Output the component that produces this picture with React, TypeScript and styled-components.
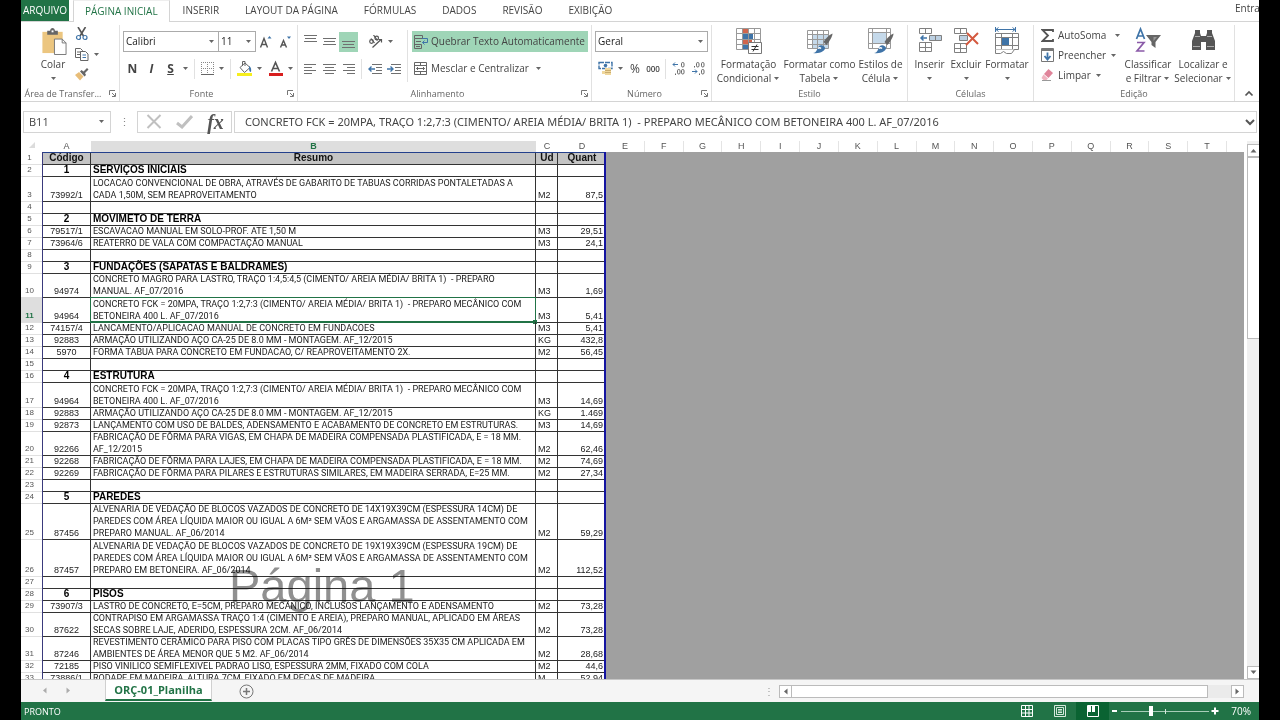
import React from "react";
import styled, { createGlobalStyle, css } from "styled-components";

const GREEN = "#217346";
const LINE = "#d4d4d4";
const ICON = "#666666";
const BLUE = "#3f74a8";
const UI = `"Open Sans", "Noto Sans", sans-serif`;
const SHEET = `"Liberation Sans", Arial, sans-serif`;

const GlobalStyle = createGlobalStyle`
  *, *::before, *::after { box-sizing: border-box; }
  body { margin: 0; background: #000; color: #444; font: 10px/13px ${UI}; }
  button, input, select { font: inherit; color: inherit; }
  button { border: 0; padding: 0; background: none; white-space: nowrap; }
`;

const Frame = styled.div`
  height: 100vh;
  padding: 0 21px;
  background: #000;
`;

const Window = styled.div`
  display: flex;
  flex-direction: column;
  height: 100%;
  overflow: hidden;
  background: #fff;
`;

/* ---------- tab strip ---------- */

const Tabs = styled.nav`
  display: flex;
  flex: none;
  height: 22px;
  border-bottom: 1px solid ${LINE};
`;

const FileTab = styled.button`
  width: 48px;
  margin-right: 4px;
  background: ${GREEN};
  color: #fff;
`;

const Tab = styled.button<{ $active?: boolean }>`
  padding: 0 13px;
  ${(p) =>
    p.$active &&
    css`
      height: 22px;
      padding: 0 11px 1px;
      border: 1px solid ${LINE};
      border-top-color: #eee;
      border-bottom: 0;
      background: #fff;
      color: ${GREEN};
    `}
`;

const SignIn = styled.button`
  width: 24px;
  height: 17px;
  margin-left: auto;
  overflow: hidden;
  text-align: left;
`;

/* ---------- ribbon ---------- */

const Ribbon = styled.section`
  display: flex;
  flex: none;
  height: 80px;
  border-bottom: 1px solid ${LINE};
`;

const GroupBox = styled.section<{ $width: number }>`
  display: flex;
  flex-direction: column;
  flex: none;
  width: ${(p) => p.$width}px;
  height: 76px;
  margin-top: 3px;
  border-right: 1px solid #e1e1e1;
`;

const GroupBody = styled.div<{ $pad?: number; $center?: boolean }>`
  display: flex;
  flex: 1;
  justify-content: ${(p) => (p.$center ? "center" : "flex-start")};
  padding-left: ${(p) => p.$pad ?? 0}px;
`;

const GroupFoot = styled.footer`
  display: flex;
  align-items: center;
  height: 14px;
  margin-bottom: 1px;
  color: #666;
  font-size: 9px;
`;

const GroupName = styled.span`
  flex: 1;
  text-align: center;
  white-space: nowrap;
`;

const Launcher = styled.button`
  display: flex;
  align-items: center;
  justify-content: center;
  width: 14px;
  height: 14px;
`;

const Stack = styled.div`
  display: flex;
  flex-direction: column;
  gap: 6px;
  padding-top: 6px;
`;

const Row = styled.div`
  display: flex;
  align-items: center;
  height: 21px;
`;

const Tool = styled.button<{ $w?: number; $on?: boolean }>`
  display: flex;
  align-items: center;
  justify-content: center;
  width: ${(p) => p.$w ?? 19}px;
  height: 20px;
  background: ${(p) => (p.$on ? "#9fd5b7" : "none")};
  font-size: 12px;
`;

const NumberTool = styled(Tool)`
  font-size: 8px;
  font-weight: 600;
`;

const WideTool = styled.button<{ $on?: boolean }>`
  display: flex;
  align-items: center;
  gap: 3px;
  width: 176px;
  height: 21px;
  padding-left: 2px;
  background: ${(p) => (p.$on ? "#9fd5b7" : "none")};

  svg:last-child:not(:first-child) {
    margin-left: 3px;
  }
`;

const Split = styled.span<{ $tall?: boolean }>`
  width: 1px;
  height: ${(p) => (p.$tall ? 52 : 20)}px;
  margin: ${(p) => (p.$tall ? "5px 4px 0" : "0 3px")};
  background: #e1e1e1;
`;

const Spacer = styled.span`
  width: 8px;
`;

const BigTool = styled.button<{ $w: number }>`
  display: flex;
  flex-direction: column;
  align-items: center;
  width: ${(p) => p.$w}px;
  padding-top: 2px;

  > svg {
    margin-bottom: 2px;
  }
`;

const BigLine = styled.span`
  display: flex;
  align-items: center;
  gap: 2px;
  height: 14px;
`;

const IconStack = styled.div`
  display: flex;
  flex-direction: column;
  gap: 6px;
  padding-top: 2px;
`;

const IconLine = styled.button`
  display: flex;
  align-items: center;
  gap: 4px;
  height: 14px;
`;

const EditStack = styled.div`
  display: flex;
  flex-direction: column;
  width: 82px;
`;

const EditLine = styled.button<{ $gap?: number }>`
  display: flex;
  align-items: center;
  gap: 4px;
  height: 20px;

  svg:last-child {
    margin-left: ${(p) => p.$gap ?? 0}px;
  }
`;

const SelectBox = styled.label<{ $w: number }>`
  display: flex;
  align-items: center;
  width: ${(p) => p.$w}px;
  height: 21px;
  padding-right: 3px;
  border: 1px solid #ababab;
  background: #fff;
  color: #222;

  & + & {
    border-left: 0;
  }
`;

const Select = styled.select`
  flex: 1;
  min-width: 0;
  padding: 0 0 0 2px;
  border: 0;
  outline: 0;
  appearance: none;
  background: none;
`;

const Collapse = styled.button`
  display: flex;
  align-self: flex-end;
  justify-content: center;
  flex: 1;
  padding: 0 0 4px 4px;
`;

/* ---------- formula bar ---------- */

const FormulaRow = styled.div`
  display: flex;
  flex: none;
  align-items: center;
  height: 39px;
  padding: 0 2px;
  font-size: 11px;
`;

const Boxed = styled.div`
  display: flex;
  align-items: center;
  height: 22px;
  border: 1px solid ${LINE};
`;

const NameBox = styled(Boxed)`
  width: 88px;
  padding: 0 5px;
`;

const NameInput = styled.input`
  flex: 1;
  min-width: 0;
  padding: 0;
  border: 0;
  outline: 0;
`;

const Dots = styled.span`
  width: 26px;
  color: #888;
  text-align: center;
`;

const Commands = styled(Boxed)`
  width: 95px;
  margin-right: 2px;
`;

const Command = styled.button`
  display: flex;
  align-items: center;
  justify-content: center;
  width: 31px;
  height: 20px;
`;

const FxLabel = styled(Command)`
  color: #555;
  font: italic bold 20px/20px "Liberation Serif", serif;
`;

const FormulaBox = styled(Boxed)`
  flex: 1;
  padding: 0 1px 0 10px;
`;

const FormulaInput = styled(NameInput)`
  font-family: "Noto Sans", sans-serif;
`;

/* ---------- worksheet ---------- */

const Sheet = styled.main`
  display: flex;
  flex: 1;
  min-height: 0;
  overflow: hidden;
  font-family: ${SHEET};
  font-size: 9px;
  line-height: 12px;
`;

const Printed = styled.div`
  position: relative;
  flex: none;
`;

const Grid = styled.table`
  width: 585px;
  border-spacing: 0;
  table-layout: fixed;
  color: #222;

  th,
  td {
    padding: 0;
    vertical-align: bottom;
    white-space: pre;
  }
`;

const Letter = styled.th<{ $on?: boolean }>`
  height: 11px;
  background: ${(p) => (p.$on ? "#dedede" : "#fff")};
  color: ${(p) => (p.$on ? GREEN : "#555")};
  font-weight: ${(p) => (p.$on ? 700 : 400)};
  line-height: 11px;
`;

const RowNumber = styled.th<{ $on?: boolean }>`
  background: ${(p) => (p.$on ? "#dedede" : "none")};
  box-shadow: 0 1px 0 #e0e0e0;
  color: ${(p) => (p.$on ? GREEN : "#555")};
  font-size: 8px;
  font-weight: ${(p) => (p.$on ? 700 : 400)};
  text-align: center;

  && {
    padding-right: 4px;
  }
`;

const TableRow = styled.tr<{ $h: number }>`
  height: ${(p) => p.$h}px;
`;

/* The lower rule is drawn just outside the cell, so text keeps clear of it. */
const under = "0 1px 0 #333";
const rule = `${under}, inset -1px 0 0 #333`;

const TitleCell = styled.th<{ $first?: boolean; $last?: boolean }>`
  background: #c4c4c4;
  box-shadow: ${(p) =>
    (p.$last ? "inset -2px 0 0 #1414a0, " : "") +
    (p.$first ? "inset 1px 0 0 #3a3a7c, " : "") +
    "inset 0 1px 0 #24408c, " +
    rule};
  color: #111;
  font-size: 10px;
`;

const Code = styled.td<{ $bold?: boolean }>`
  box-shadow: inset 1px 0 0 #3a3a7c, ${rule};
  text-align: center;
  ${(p) => p.$bold && "font-size: 10px; font-weight: 700; color: #000;"}
`;

const Text = styled.td<{ $bold?: boolean }>`
  position: relative;
  box-shadow: ${rule};
  font-family: Roboto, ${SHEET};

  && {
    padding-left: 2px;
  }

  ${(p) => p.$bold && `font-family: ${SHEET}; font-size: 10px; font-weight: 700; color: #000;`}
`;

const Unit = styled.td`
  box-shadow: ${rule};

  && {
    padding-left: 2px;
  }
`;

const Amount = styled.td`
  box-shadow: inset -2px 0 0 #1414a0, ${under};
  text-align: right;

  && {
    padding-right: 3px;
  }
`;

const Selection = styled.span`
  position: absolute;
  inset: 0 0 -1px -1px;
  border: 1px solid ${GREEN};
  box-shadow: inset 0 -1px 0 ${GREEN};

  &::after {
    content: "";
    position: absolute;
    right: -2px;
    bottom: -2px;
    width: 4px;
    height: 4px;
    background: ${GREEN};
  }
`;

const Watermark = styled.div`
  position: absolute;
  top: 418px;
  left: 208px;
  color: #909090;
  font-size: 47px;
  line-height: 54px;
  mix-blend-mode: multiply;
  pointer-events: none;
  white-space: nowrap;
`;

const Outside = styled.div`
  display: flex;
  flex: 1;
  flex-direction: column;
  min-width: 0;
  margin-right: 3px;
`;

const Letters = styled.div`
  display: grid;
  grid-template-columns: repeat(16, 1fr);
  height: 11px;
  padding-right: 17px;
  color: #555;
  line-height: 11px;
  text-align: center;
`;

const OuterLetter = styled.span`
  border-right: 1px solid #e4e4e4;
`;

const Backdrop = styled.div`
  flex: 1;
  background: #a0a0a0;
`;

const VScroll = styled.div`
  display: flex;
  flex: none;
  flex-direction: column;
  width: 12px;
  padding-top: 3px;
  background: #f0f0f0;
`;

const ScrollButton = styled.button`
  display: flex;
  flex: none;
  align-items: center;
  justify-content: center;
  width: 13px;
  height: 13px;
  border: 1px solid #bbb;
  background: #fff;
`;

const VThumb = styled.div`
  flex: 0 0 34%;
  margin-bottom: auto;
  border: 1px solid #bbb;
  border-right: 0;
  background: #fff;
`;

/* ---------- sheet tabs and status bar ---------- */

const SheetTabs = styled.div`
  display: flex;
  flex: none;
  align-items: center;
  height: 23px;
  padding: 0 15px 0 11px;
  border-top: 1px solid #c6c6c6;
  background: #f5f5f5;
`;

const NavArrow = styled.button`
  width: 24px;
  height: 14px;
  opacity: 0.5;
`;

const SheetTab = styled.button`
  align-self: flex-start;
  width: 107px;
  height: 21px;
  margin: 0 27px 0 25px;
  border: 1px solid #d0d0d0;
  border-top: 0;
  border-bottom: 2px solid ${GREEN};
  background: #fff;
  color: ${GREEN};
  font-size: 11px;
  font-weight: 700;
`;

const AddSheet = styled.button`
  display: flex;
`;

const HScroll = styled.div`
  display: flex;
  flex: 0 0 40%;
  align-items: center;
  height: 13px;
  margin-left: auto;
`;

const HTrack = styled.div`
  flex: 1;
  height: 13px;
  padding-right: 23px;
  background: #ebebeb;
`;

const HThumb = styled.div`
  height: 13px;
  border: 1px solid #bbb;
  border-left: 0;
  background: #fff;
`;

const Grip = styled.span`
  width: 20px;
  color: #999;
  text-align: center;
`;

const Status = styled.footer`
  display: flex;
  flex: none;
  align-items: center;
  height: 18px;
  padding: 0 8px 0 3px;
  background: ${GREEN};
  color: #fff;
  font-size: 9px;
`;

const ViewButtons = styled.div`
  display: flex;
  margin-left: auto;
`;

const ViewButton = styled.button<{ $on?: boolean }>`
  display: flex;
  align-items: center;
  justify-content: center;
  width: 33px;
  height: 18px;
  background: ${(p) => (p.$on ? "#0a6332" : "none")};
`;

const ZoomButton = styled.button`
  display: flex;
  justify-content: center;
  width: 12px;
`;

const Zoom = styled.input`
  width: 88px;
  height: 12px;
  margin: 0;
  appearance: none;
  background: linear-gradient(#d5e8dc, #d5e8dc) 50% 50% / 1px 5px no-repeat,
    linear-gradient(#a8cdb8, #a8cdb8) 50% 50% / 100% 1px no-repeat;

  &::-webkit-slider-thumb {
    appearance: none;
    width: 4px;
    height: 10px;
    background: #fff;
  }
`;

const ZoomValue = styled.span`
  width: 30px;
  font-size: 10px;
  text-align: right;
`;

/* ---------- icons ---------- */

const Caret = () => (
  <svg width="7" height="5" viewBox="0 0 7 5" aria-hidden="true">
    <path d="M1 1h5L3.500 4z" fill={ICON} />
  </svg>
);

const Arrow = ({ dir }: { dir: "up" | "down" | "left" | "right" }) => {
  const turn = { up: 0, right: 90, down: 180, left: 270 }[dir];
  return (
    <svg width="9" height="9" viewBox="0 0 9 9" aria-hidden="true">
      <path d="M1.500 6.500h6L4.500 3z" fill={ICON} transform={`rotate(${turn} 4.500 4.500)`} />
    </svg>
  );
};

const LauncherIcon = () => (
  <svg width="7" height="7" viewBox="0 0 7 7" fill="none" stroke="#777">
    <path d="M.5 5V.5H6M3 3l3 3M6.500 3v3.500H3" />
  </svg>
);

const PasteIcon = () => (
  <svg width="27" height="28" viewBox="0 0 27 29">
    <path d="M2 5h21v22H2z" fill="#ecc680" />
    <path d="M7 4h3c0-4 5-4 5 0h3v4H7z" fill="#666" />
    <path d="M11.500 3.500h2v2h-2z" fill="#fff" />
    <path d="M14.500 12.500h8l4 4v12h-12z" fill="#fff" stroke="#777" />
    <path d="M22.500 12.500v4h4" fill="none" stroke="#777" />
  </svg>
);

const ScissorsIcon = () => (
  <svg width="14" height="14" viewBox="0 0 14 14" fill="none">
    <path d="M3 0l5.500 9M10.500 0L5 9" stroke="#555" strokeWidth="1.600" />
    <circle cx="3.500" cy="10.500" r="2" stroke={BLUE} strokeWidth="1.200" />
    <circle cx="10" cy="10.500" r="2" stroke={BLUE} strokeWidth="1.200" />
  </svg>
);

const CopyIcon = () => (
  <svg width="14" height="14" viewBox="0 0 14 14" fill="#fff" stroke="#666">
    <path d="M.5 1.500h5l2 2v7h-7z" />
    <path d="M2 5h4M2 7.500h4" />
    <path d="M5.500 4.500h5l2.500 2.500v6.500h-7.500z" />
    <path d="M7.500 8h3.500M7.500 10.500h3.500" stroke={BLUE} />
  </svg>
);

const BrushIcon = () => (
  <svg width="14" height="14" viewBox="0 0 14 14">
    <path d="M0 8l4-3 4.500 4.500L5 13.500z" fill="#e8bd78" />
    <path d="M5 4.500l1.500-1.500 2 1.500L12 1l1.500 1.500L10 6l1 2-1.500 1.500z" fill="#666" />
  </svg>
);

const FontSizeIcon = ({ grow }: { grow?: boolean }) => (
  <svg width="14" height="16" viewBox="0 0 14 16">
    <path
      d={grow ? "M1.500 13.500L5 4.500l3.500 9M3 10.500h4" : "M2.500 13.500L5.500 6.500l3 7M3.500 11h4"}
      fill="none"
      stroke="#555"
      strokeWidth="1.400"
    />
    <path d={grow ? "M8.500 4.500h4L10.500 2z" : "M9 2.500h4L11 5z"} fill={BLUE} />
  </svg>
);

const BordersIcon = () => (
  <svg width="13" height="13" viewBox="0 0 13 13" fill="none" stroke="#888">
    <path d="M.5 0v12M6.500 0v12M12.500 0v12M0 .5h13M0 6.500h13" strokeDasharray="1 1" />
    <path d="M0 12.500h13" stroke="#666" />
  </svg>
);

const FillIcon = () => (
  <svg width="17" height="17" viewBox="0 0 17 17">
    <path d="M4 7.500L9 3l5 4.500L8.500 12.500z" fill="#fff" stroke="#666" />
    <path d="M6.500 6V1.500h2.500V6" fill="none" stroke="#666" />
    <path d="M13 6c2 1 2.500 3 2 6-2 0-2-3-2-6z" fill={BLUE} />
    <path d="M1 13h15v3H1z" fill="#f6ee1e" />
  </svg>
);

const FontColorIcon = () => (
  <svg width="15" height="17" viewBox="0 0 15 17">
    <path d="M3.500 11.500L7.500 2.500l4 9M5 8.500h5" fill="none" stroke="#555" strokeWidth="1.600" />
    <path d="M1 13h14v3H1z" fill="#d81e1e" />
  </svg>
);

const LinesIcon = ({ rows }: { rows: [number, number, number][] }) => (
  <svg width="13" height="18" viewBox="0 0 13 18" stroke="#707070">
    {rows.map(([x1, x2, y]) => (
      <path key={y} d={`M${x1} ${y}.500H${x2}`} />
    ))}
  </svg>
);

const OrientIcon = () => (
  <svg width="15" height="14" viewBox="0 0 15 14" fill="none" stroke="#555" strokeWidth="1.200">
    <circle cx="3.500" cy="6.500" r="1.800" />
    <path d="M3 3.500l3.500 4.500" />
    <path d="M5.500 0l4 5.500" />
    <circle cx="8.700" cy="3" r="1.800" />
    <path d="M4.500 12.500L13 4.500M10.500 4.500H13.500V7.500" />
  </svg>
);

const IndentIcon = ({ right }: { right?: boolean }) => (
  <svg width="14" height="12" viewBox="0 0 14 12" fill="none" stroke="#707070">
    <path d="M4 1.500h10M8 4.500h6M8 7.500h6M4 10.500h10" />
    <path
      d={right ? "M0 6h6M3.500 3.500L6 6 3.500 8.500" : "M7 6H1M3.500 3.500L1 6l2.500 2.500"}
      stroke={BLUE}
      strokeWidth="1.400"
    />
  </svg>
);

const WrapIcon = () => (
  <svg width="14" height="14" viewBox="0 0 14 14" fill="none" stroke="#666">
    <path d="M.5.500h8v3h-8zM.5 3.500v10h7v-4h-7" />
    <path d="M2 6.500h5M2 11.500h4" />
    <path d="M8 3.500h5.500v4H8.500M10.500 5.500l-2 2 2 2" stroke={BLUE} />
  </svg>
);

const MergeIcon = () => (
  <svg width="14" height="14" viewBox="0 0 14 14" fill="none" stroke="#666">
    <path d="M.5.500h12v12H.5zM.5 3.500h12M.5 9.500h12M6.500.500v3M6.500 9.500v3" />
    <path d="M2.500 6.500h8M4 5L2.500 6.500 4 8M9 5l1.500 1.500L9 8" />
  </svg>
);

const MoneyIcon = () => (
  <svg width="15" height="15" viewBox="0 0 15 15">
    <path d="M1 1.500h13v6H1z" fill="#fff" stroke={BLUE} strokeWidth="1.400" strokeDasharray="5 1" />
    <circle cx="7.500" cy="4.500" r="1.800" fill={BLUE} />
    <path d="M7 7h6v7H7z" fill="#f0d79c" />
    <path d="M7 9.500h6M7 11.500h6" stroke="#b89a5c" strokeWidth=".7" />
    <path d="M4 10h3v3H4z" fill="#f0d79c" />
  </svg>
);

const DecimalIcon = ({ less }: { less?: boolean }) => (
  <svg width="15" height="15" viewBox="0 0 15 15" fill="none" stroke="#666">
    {less ? (
      <g>
        <rect x="5.500" y="1.500" width="2.500" height="4.500" rx="1.200" />
        <rect x="10.500" y="1.500" width="2.500" height="4.500" rx="1.200" />
        <rect x="10.500" y="8.500" width="2.500" height="4.500" rx="1.200" />
        <path d="M3.500 5v1.500M8.500 12.500V14" />
        <path d="M1 10.500h5M4 8.500l2 2-2 2" stroke={BLUE} />
      </g>
    ) : (
      <g>
        <rect x="9.500" y="1.500" width="2.500" height="4.500" rx="1.200" />
        <rect x="5.500" y="8.500" width="2.500" height="4.500" rx="1.200" />
        <rect x="9.500" y="8.500" width="2.500" height="4.500" rx="1.200" />
        <path d="M3.500 12.500V14" />
        <path d="M6 3.500H1M3 1.500l-2 2 2 2" stroke={BLUE} />
      </g>
    )}
  </svg>
);

const CondFormatIcon = () => (
  <svg width="26" height="28" viewBox="0 0 26 28">
    <path d="M.5 1.500h24v21H.5z" fill="#fff" />
    <path d="M7 2h6v5H7zM7 12h9v5H7z" fill="#d0654c" />
    <path d="M7 7h10v5H7zM7 17h5v5H7z" fill={BLUE} />
    <path
      d="M.5 1.500h24v21H.5zM6.500 1.500v21M12.500 1.500v21M18.500 1.500v21M.5 6.500h24M.5 12.500h24M.5 17.500h24"
      fill="none"
      stroke="#999"
    />
    <path d="M12.500 15.500h13v11h-13z" fill="#fff" stroke="#777" />
    <path d="M15.500 19.500h7M15.500 22.500h7M21 17.500l-4 7" stroke="#333" />
  </svg>
);

const Paintbrush = () => (
  <g>
    <path d="M25.500 6.500c0 3-3 8-6 11.500l-3-3c2-3 5-7 9-8.500z" fill="#666" />
    <path d="M6 26c4 0 4-5 6-7 2-2 6 0 6 2 0 3-5 6-12 5z" fill={BLUE} />
    <path d="M11 21.500c1-1 2-1 3 0" stroke="#fff" strokeWidth="1.500" fill="none" />
  </g>
);

const TableFormatIcon = () => (
  <svg width="26" height="28" viewBox="0 0 26 28">
    <path d="M.5 3.500h21v18H.5z" fill="#fff" />
    <path d="M6 8h15v13H6z" fill="#c5d9ea" />
    <path
      d="M.5 3.500h21v18H.5zM5.500 3.500v18M10.500 3.500v18M16.500 3.500v18M.5 7.500h21M.5 12.500h21M.5 17.500h21"
      fill="none"
      stroke="#999"
    />
    <Paintbrush />
  </svg>
);

const CellStyleIcon = () => (
  <svg width="26" height="28" viewBox="0 0 26 28">
    <path d="M.5 1.500h22v20H.5zM4.500 1.500v20M18.500 1.500v20M.5 5.500h22M.5 16.500h22" fill="#fff" stroke="#999" />
    <path d="M5 6h13v10H5z" fill="#c5d9ea" />
    <Paintbrush />
  </svg>
);

const InsertIcon = () => (
  <svg width="26" height="28" viewBox="0 0 26 28" fill="#fff" stroke="#808080">
    <path d="M2.500 1.500h12v5h-12zM8.500 1.500v5M2.500 15.500h12v9h-12zM8.500 15.500v9M2.500 20.500h12" />
    <path d="M12.500 8.500h12v5h-12zM18.500 8.500v5" fill="#bcd0e2" />
    <path d="M10 11H4M6.500 8.500L4 11l2.500 2.500" fill="none" stroke={BLUE} strokeWidth="1.500" />
  </svg>
);

const DeleteIcon = () => (
  <svg width="28" height="28" viewBox="0 0 28 28" fill="#fff" stroke="#808080">
    <path d="M2.500 1.500h12v5h-12zM8.500 1.500v5M2.500 16.500h12v9h-12zM8.500 16.500v9M2.500 21.500h12" />
    <path d="M7.500 8.500h8v5h-8z" fill="#bcd0e2" />
    <path d="M15 6l11 11M26 6L14 18" stroke="#d4593f" strokeWidth="2" />
  </svg>
);

const FormatCellsIcon = () => (
  <svg width="26" height="28" viewBox="0 0 26 28" fill="#fff" stroke="#808080">
    <path d="M1.500 6.500h23v16h-23zM7.500 6.500v16M18.500 6.500v16M1.500 10.500h23M1.500 18.500h23" />
    <path d="M8 11h7v7H8z" fill={BLUE} stroke="none" />
    <path d="M1.500 22.500v4h5l3-2 3 2h5l3-4" />
    <path d="M2 2.500h19M4.500.500L2 2.500l2.500 2M18.500.500l2.500 2-2.500 2M1.500 0v5M21.500 0v5" fill="none" stroke={BLUE} />
  </svg>
);

const SigmaIcon = () => (
  <svg width="13" height="13" viewBox="0 0 13 13">
    <path d="M12 3V1H1.500L7 6.500 1.500 12H12v-2" fill="none" stroke="#555" strokeWidth="1.800" />
  </svg>
);

const FillDownIcon = () => (
  <svg width="13" height="14" viewBox="0 0 13 14">
    <path d="M.5.500h12v13H.5z" fill="#fff" stroke="#777" />
    <path d="M1 1h11v2H1z" fill="#777" />
    <path d="M6.500 4.500v7M3.500 8l3 3.500 3-3.500" fill="none" stroke={BLUE} strokeWidth="1.800" />
  </svg>
);

const EraserIcon = () => (
  <svg width="13" height="12" viewBox="0 0 13 12">
    <path d="M7.500 0l4.500 4-4.500 5L3 5z" fill="#e0849a" />
    <path d="M2.500 5.500l4.500 4L5.500 11h-3L.5 9z" fill="#efb4c0" />
    <path d="M1 11.500h9" stroke="#999" />
  </svg>
);

const SortIcon = () => (
  <svg width="27" height="28" viewBox="0 0 27 28" fill="none">
    <path d="M1.500 12L5.500 2l4 10M3 9h5.500" stroke={BLUE} strokeWidth="1.700" />
    <path d="M2 15.500h7L2 24h7.500" stroke="#8a5aa8" strokeWidth="1.700" />
    <path d="M11 8h15l-5.500 7v6l-4-3v-3z" fill="#666" />
    <path d="M18.500 10h3.500l-3.500 4z" fill="#999" />
  </svg>
);

const BinocularsIcon = () => (
  <svg width="25" height="28" viewBox="0 0 25 28" fill="#555">
    <path d="M4 6V3h5v3l1 3h5l1-3V3h5v3l3 8v9h-9v-8h-5v8H1v-9z" />
    <path d="M4 9.500h5M16 9.500h5M2 19.500h7M16 19.500h7" stroke="#aaa" />
  </svg>
);

const UpChevron = () => (
  <svg width="10" height="7" viewBox="0 0 10 7" fill="none" stroke="#555" strokeWidth="1.700">
    <path d="M1.500 5.500L5 2l3.500 3.500" />
  </svg>
);

/* ---------- content ---------- */

const tabNames = ["INSERIR", "LAYOUT DA PÁGINA", "FÓRMULAS", "DADOS", "REVISÃO", "EXIBIÇÃO"];
const outerLetters = "EFGHIJKLMNOPQRST".split("");

type Line = { h: number; code?: string; text?: string; unit?: string; amount?: string; bold?: boolean };

const FCK = "CONCRETO FCK = 20MPA, TRAÇO 1:2,7:3 (CIMENTO/ AREIA MÉDIA/ BRITA 1)  - PREPARO MECÂNICO COM";

const lines: Line[] = [
  { h: 12, code: "1", text: "SERVIÇOS INICIAIS", bold: true },
  { h: 25, code: "73992/1", text: "LOCACAO CONVENCIONAL DE OBRA, ATRAVÉS DE GABARITO DE TABUAS CORRIDAS PONTALETADAS A\nCADA 1,50M, SEM REAPROVEITAMENTO", unit: "M2", amount: "87,5" },
  { h: 12 },
  { h: 12, code: "2", text: "MOVIMETO DE TERRA", bold: true },
  { h: 12, code: "79517/1", text: "ESCAVACAO MANUAL EM SOLO-PROF. ATE 1,50 M", unit: "M3", amount: "29,51" },
  { h: 12, code: "73964/6", text: "REATERRO DE VALA COM COMPACTAÇÃO MANUAL", unit: "M3", amount: "24,1" },
  { h: 12 },
  { h: 12, code: "3", text: "FUNDAÇÕES (SAPATAS E BALDRAMES)", bold: true },
  { h: 24, code: "94974", text: "CONCRETO MAGRO PARA LASTRO, TRAÇO 1:4,5:4,5 (CIMENTO/ AREIA MÉDIA/ BRITA 1)  - PREPARO\nMANUAL. AF_07/2016", unit: "M3", amount: "1,69" },
  { h: 25, code: "94964", text: FCK + "\nBETONEIRA 400 L. AF_07/2016", unit: "M3", amount: "5,41" },
  { h: 12, code: "74157/4", text: "LANCAMENTO/APLICACAO MANUAL DE CONCRETO EM FUNDACOES", unit: "M3", amount: "5,41" },
  { h: 12, code: "92883", text: "ARMAÇÃO UTILIZANDO AÇO CA-25 DE 8.0 MM - MONTAGEM. AF_12/2015", unit: "KG", amount: "432,8" },
  { h: 12, code: "5970", text: "FORMA TABUA PARA CONCRETO EM FUNDACAO, C/ REAPROVEITAMENTO 2X.", unit: "M2", amount: "56,45" },
  { h: 12 },
  { h: 12, code: "4", text: "ESTRUTURA", bold: true },
  { h: 25, code: "94964", text: FCK + "\nBETONEIRA 400 L. AF_07/2016", unit: "M3", amount: "14,69" },
  { h: 12, code: "92883", text: "ARMAÇÃO UTILIZANDO AÇO CA-25 DE 8.0 MM - MONTAGEM. AF_12/2015", unit: "KG", amount: "1.469" },
  { h: 12, code: "92873", text: "LANÇAMENTO COM USO DE BALDES, ADENSAMENTO E ACABAMENTO DE CONCRETO EM ESTRUTURAS.", unit: "M3", amount: "14,69" },
  { h: 24, code: "92266", text: "FABRICAÇÃO DE FÔRMA PARA VIGAS, EM CHAPA DE MADEIRA COMPENSADA PLASTIFICADA, E = 18 MM.\nAF_12/2015", unit: "M2", amount: "62,46" },
  { h: 12, code: "92268", text: "FABRICAÇÃO DE FÔRMA PARA LAJES, EM CHAPA DE MADEIRA COMPENSADA PLASTIFICADA, E = 18 MM.", unit: "M2", amount: "74,69" },
  { h: 12, code: "92269", text: "FABRICAÇÃO DE FÔRMA PARA PILARES E ESTRUTURAS SIMILARES, EM MADEIRA SERRADA, E=25 MM.", unit: "M2", amount: "27,34" },
  { h: 12 },
  { h: 12, code: "5", text: "PAREDES", bold: true },
  { h: 36, code: "87456", text: "ALVENARIA DE VEDAÇÃO DE BLOCOS VAZADOS DE CONCRETO DE 14X19X39CM (ESPESSURA 14CM) DE\nPAREDES COM ÁREA LÍQUIDA MAIOR OU IGUAL A 6M² SEM VÃOS E ARGAMASSA DE ASSENTAMENTO COM\nPREPARO MANUAL. AF_06/2014", unit: "M2", amount: "59,29" },
  { h: 37, code: "87457", text: "ALVENARIA DE VEDAÇÃO DE BLOCOS VAZADOS DE CONCRETO DE 19X19X39CM (ESPESSURA 19CM) DE\nPAREDES COM ÁREA LÍQUIDA MAIOR OU IGUAL A 6M² SEM VÃOS E ARGAMASSA DE ASSENTAMENTO COM\nPREPARO EM BETONEIRA. AF_06/2014", unit: "M2", amount: "112,52" },
  { h: 12 },
  { h: 12, code: "6", text: "PISOS", bold: true },
  { h: 12, code: "73907/3", text: "LASTRO DE CONCRETO, E=5CM, PREPARO MECÂNICO, INCLUSOS LANÇAMENTO E ADENSAMENTO", unit: "M2", amount: "73,28" },
  { h: 24, code: "87622", text: "CONTRAPISO EM ARGAMASSA TRAÇO 1:4 (CIMENTO E AREIA), PREPARO MANUAL, APLICADO EM ÁREAS\nSECAS SOBRE LAJE, ADERIDO, ESPESSURA 2CM. AF_06/2014", unit: "M2", amount: "73,28" },
  { h: 24, code: "87246", text: "REVESTIMENTO CERÂMICO PARA PISO COM PLACAS TIPO GRÊS DE DIMENSÕES 35X35 CM APLICADA EM\nAMBIENTES DE ÁREA MENOR QUE 5 M2. AF_06/2014", unit: "M2", amount: "28,68" },
  { h: 12, code: "72185", text: "PISO VINILICO SEMIFLEXIVEL PADRAO LISO, ESPESSURA 2MM, FIXADO COM COLA", unit: "M2", amount: "44,6" },
  { h: 12, code: "73886/1", text: "RODAPE EM MADEIRA, ALTURA 7CM, FIXADO EM PECAS DE MADEIRA", unit: "M", amount: "52,94" },
];

type GroupProps = React.ComponentProps<typeof GroupBody> & { name: string; width: number; launcher?: boolean };

const Group = ({ name, width, launcher, children, ...body }: GroupProps) => (
  <GroupBox $width={width} aria-label={name}>
    <GroupBody {...body}>{children}</GroupBody>
    <GroupFoot>
      <GroupName>{name}</GroupName>
      {launcher && (
        <Launcher aria-label={`Opções de ${name}`}>
          <LauncherIcon />
        </Launcher>
      )}
    </GroupFoot>
  </GroupBox>
);

const Drop = ({ label }: { label: string }) => (
  <Tool $w={11} aria-label={label}>
    <Caret />
  </Tool>
);

const Choice = ({ label, value, width }: { label: string; value: string; width: number }) => (
  <SelectBox $w={width}>
    <Select aria-label={label} defaultValue={value}>
      <option>{value}</option>
    </Select>
    <Caret />
  </SelectBox>
);

const RibbonPanel = () => (
  <Ribbon>
    <Group name="Área de Transfer..." width={99} launcher $pad={10}>
      <BigTool $w={44}>
        <PasteIcon />
        <BigLine>Colar</BigLine>
        <BigLine><Caret /></BigLine>
      </BigTool>
      <IconStack>
        <IconLine aria-label="Recortar"><ScissorsIcon /></IconLine>
        <IconLine aria-label="Copiar"><CopyIcon /><Caret /></IconLine>
        <IconLine aria-label="Pincel de formatação"><BrushIcon /></IconLine>
      </IconStack>
    </Group>

    <Group name="Fonte" width={178} launcher $pad={3}>
      <Stack>
        <Row>
          <Choice label="Fonte" value="Calibri" width={96} />
          <Choice label="Tamanho" value="11" width={37} />
          <Tool aria-label="Aumentar fonte"><FontSizeIcon grow /></Tool>
          <Tool aria-label="Diminuir fonte"><FontSizeIcon /></Tool>
        </Row>
        <Row>
          <Tool aria-label="Negrito"><b>N</b></Tool>
          <Tool aria-label="Itálico"><b><i>I</i></b></Tool>
          <Tool aria-label="Sublinhado"><b><u>S</u></b></Tool>
          <Drop label="Mais sublinhados" />
          <Split />
          <Tool $w={18} aria-label="Bordas"><BordersIcon /></Tool>
          <Drop label="Mais bordas" />
          <Split />
          <Tool $w={20} aria-label="Cor de preenchimento"><FillIcon /></Tool>
          <Drop label="Mais cores de preenchimento" />
          <Tool $w={20} aria-label="Cor da fonte"><FontColorIcon /></Tool>
          <Drop label="Mais cores da fonte" />
        </Row>
      </Stack>
    </Group>

    <Group name="Alinhamento" width={294} launcher $pad={3}>
      <Stack>
        <Row>
          <Tool aria-label="Alinhar em cima"><LinesIcon rows={[[0, 13, 2], [1, 12, 5], [0, 13, 8]]} /></Tool>
          <Tool aria-label="Alinhar no meio"><LinesIcon rows={[[0, 13, 5], [1, 12, 8], [0, 13, 11]]} /></Tool>
          <Tool $on aria-label="Alinhar embaixo"><LinesIcon rows={[[0, 13, 8], [1, 12, 11], [0, 13, 14]]} /></Tool>
          <Spacer />
          <Tool aria-label="Orientação"><OrientIcon /></Tool>
          <Drop label="Mais orientações" />
        </Row>
        <Row>
          <Tool aria-label="Alinhar à esquerda"><LinesIcon rows={[[0, 12, 4], [0, 8, 7], [0, 12, 10], [0, 8, 13]]} /></Tool>
          <Tool aria-label="Centralizar"><LinesIcon rows={[[0, 13, 4], [2, 11, 7], [0, 13, 10], [2, 11, 13]]} /></Tool>
          <Tool aria-label="Alinhar à direita"><LinesIcon rows={[[1, 13, 4], [5, 13, 7], [1, 13, 10], [5, 13, 13]]} /></Tool>
          <Split />
          <Tool aria-label="Diminuir recuo"><IndentIcon /></Tool>
          <Tool aria-label="Aumentar recuo"><IndentIcon right /></Tool>
        </Row>
      </Stack>
      <Split $tall />
      <Stack>
        <WideTool $on><WrapIcon />Quebrar Texto Automaticamente</WideTool>
        <WideTool><MergeIcon />Mesclar e Centralizar<Caret /></WideTool>
      </Stack>
    </Group>

    <Group name="Número" width={120} launcher $pad={3}>
      <Stack>
        <Row>
          <Choice label="Formato de número" value="Geral" width={113} />
        </Row>
        <Row>
          <Tool $w={20} aria-label="Formato contábil"><MoneyIcon /></Tool>
          <Drop label="Mais moedas" />
          <Tool $w={18} aria-label="Porcentagem">%</Tool>
          <NumberTool $w={18} aria-label="Separador de milhares">000</NumberTool>
          <Split />
          <Tool $w={20} aria-label="Aumentar casas"><DecimalIcon /></Tool>
          <Tool $w={19} aria-label="Diminuir casas"><DecimalIcon less /></Tool>
        </Row>
      </Stack>
    </Group>

    <Group name="Estilo" width={196} $center>
      <BigTool $w={68}>
        <CondFormatIcon />
        <BigLine>Formatação</BigLine>
        <BigLine>Condicional <Caret /></BigLine>
      </BigTool>
      <BigTool $w={74}>
        <TableFormatIcon />
        <BigLine>Formatar como</BigLine>
        <BigLine>Tabela <Caret /></BigLine>
      </BigTool>
      <BigTool $w={48}>
        <CellStyleIcon />
        <BigLine>Estilos de</BigLine>
        <BigLine>Célula <Caret /></BigLine>
      </BigTool>
    </Group>

    <Group name="Células" width={126} $center>
      <BigTool $w={37}>
        <InsertIcon />
        <BigLine>Inserir</BigLine>
        <BigLine><Caret /></BigLine>
      </BigTool>
      <BigTool $w={36}>
        <DeleteIcon />
        <BigLine>Excluir</BigLine>
        <BigLine><Caret /></BigLine>
      </BigTool>
      <BigTool $w={46}>
        <FormatCellsIcon />
        <BigLine>Formatar</BigLine>
        <BigLine><Caret /></BigLine>
      </BigTool>
    </Group>

    <Group name="Edição" width={201} $pad={7}>
      <EditStack>
        <EditLine $gap={4}><SigmaIcon />AutoSoma<Caret /></EditLine>
        <EditLine><FillDownIcon />Preencher<Caret /></EditLine>
        <EditLine><EraserIcon />Limpar<Caret /></EditLine>
      </EditStack>
      <BigTool $w={50}>
        <SortIcon />
        <BigLine>Classificar</BigLine>
        <BigLine>e Filtrar <Caret /></BigLine>
      </BigTool>
      <BigTool $w={60}>
        <BinocularsIcon />
        <BigLine>Localizar e</BigLine>
        <BigLine>Selecionar <Caret /></BigLine>
      </BigTool>
    </Group>

    <Collapse aria-label="Recolher a faixa de opções"><UpChevron /></Collapse>
  </Ribbon>
);

const Worksheet = () => (
  <Sheet>
    <Printed>
      <Grid>
        <colgroup>
          {[21, 49, 445, 22, 48].map((w) => (
            <col key={w} width={w} />
          ))}
        </colgroup>
        <thead>
          <tr>
            <Letter>
              <svg width="8" height="8" viewBox="0 0 8 8" aria-hidden="true">
                <path d="M7 1v6H1z" fill="#dcdcdc" />
              </svg>
            </Letter>
            <Letter>A</Letter>
            <Letter $on>B</Letter>
            <Letter>C</Letter>
            <Letter>D</Letter>
          </tr>
        </thead>
        <tbody>
          <TableRow $h={12}>
            <RowNumber>1</RowNumber>
            <TitleCell $first>Código</TitleCell>
            <TitleCell>Resumo</TitleCell>
            <TitleCell>Ud</TitleCell>
            <TitleCell $last>Quant</TitleCell>
          </TableRow>
          {lines.map((line, i) => (
            <TableRow key={i} $h={line.h}>
              <RowNumber $on={i === 9}>{i + 2}</RowNumber>
              <Code $bold={line.bold}>{line.code}</Code>
              <Text $bold={line.bold}>
                {line.text}
                {i === 9 && <Selection />}
              </Text>
              <Unit>{line.unit}</Unit>
              <Amount>{line.amount}</Amount>
            </TableRow>
          ))}
        </tbody>
      </Grid>
      <Watermark>Página 1</Watermark>
    </Printed>
    <Outside>
      <Letters>
        {outerLetters.map((l) => (
          <OuterLetter key={l}>{l}</OuterLetter>
        ))}
      </Letters>
      <Backdrop />
    </Outside>
    <VScroll>
      <ScrollButton aria-label="Rolar para cima"><Arrow dir="up" /></ScrollButton>
      <VThumb />
      <ScrollButton aria-label="Rolar para baixo"><Arrow dir="down" /></ScrollButton>
    </VScroll>
  </Sheet>
);

export default function App() {
  return (
    <Frame>
      <GlobalStyle />
      <Window>
        <Tabs>
          <FileTab>ARQUIVO</FileTab>
          <Tab $active>PÁGINA INICIAL</Tab>
          {tabNames.map((name) => (
            <Tab key={name}>{name}</Tab>
          ))}
          <SignIn>Entra</SignIn>
        </Tabs>

        <RibbonPanel />

        <FormulaRow>
          <NameBox>
            <NameInput aria-label="Caixa de nome" defaultValue="B11" />
            <Caret />
          </NameBox>
          <Dots>⋮</Dots>
          <Commands>
            <Command aria-label="Cancelar">
              <svg width="16" height="15" viewBox="0 0 16 15" stroke="#c0c0c0" strokeWidth="2">
                <path d="M1.500 1l13 13M14.500 1l-13 13" />
              </svg>
            </Command>
            <Command aria-label="Inserir">
              <svg width="17" height="14" viewBox="0 0 17 14" fill="none" stroke="#c0c0c0" strokeWidth="3">
                <path d="M1 8l5 4L16 1" />
              </svg>
            </Command>
            <FxLabel aria-label="Inserir função">fx</FxLabel>
          </Commands>
          <FormulaBox>
            <FormulaInput aria-label="Barra de fórmulas" defaultValue={FCK + " BETONEIRA 400 L. AF_07/2016"} />
            <svg width="10" height="8" viewBox="0 0 10 8" fill="none" stroke="#555" strokeWidth="2">
              <path d="M1 2l4 4 4-4" />
            </svg>
          </FormulaBox>
        </FormulaRow>

        <Worksheet />

        <SheetTabs>
          <NavArrow aria-label="Planilha anterior"><Arrow dir="left" /></NavArrow>
          <NavArrow aria-label="Próxima planilha"><Arrow dir="right" /></NavArrow>
          <SheetTab>ORÇ-01_Planilha</SheetTab>
          <AddSheet aria-label="Nova planilha">
            <svg width="15" height="15" viewBox="0 0 15 15" fill="none" stroke="#777">
              <circle cx="7.500" cy="7.500" r="6.500" />
              <path d="M4 7.500h7M7.500 4v7" strokeWidth="1.500" />
            </svg>
          </AddSheet>
          <HScroll>
            <Grip>⋮</Grip>
            <ScrollButton aria-label="Rolar para a esquerda"><Arrow dir="left" /></ScrollButton>
            <HTrack><HThumb /></HTrack>
            <ScrollButton aria-label="Rolar para a direita"><Arrow dir="right" /></ScrollButton>
          </HScroll>
        </SheetTabs>

        <Status>
          PRONTO
          <ViewButtons>
            <ViewButton aria-label="Normal">
              <svg width="12" height="12" viewBox="0 0 12 12" fill="none" stroke="#fff">
                <path d="M.5.500h11v11H.5zM4.500 0v12M8 0v12M0 4.500h12M0 8h12" />
              </svg>
            </ViewButton>
            <ViewButton aria-label="Layout da página">
              <svg width="12" height="12" viewBox="0 0 12 12" fill="none" stroke="#d5e8dc">
                <path d="M.5.500h11v11H.5zM2.500 2.500h7v7h-7zM4 4.500h4M4 6h4M4 7.500h4" />
              </svg>
            </ViewButton>
            <ViewButton $on aria-label="Quebras de página">
              <svg width="12" height="12" viewBox="0 0 12 12" fill="none" stroke="#fff">
                <path d="M.5.500h11v11H.5z" />
                <path d="M1 1h3v6H1zM5 1h3v6H5z" fill="#fff" stroke="none" />
              </svg>
            </ViewButton>
          </ViewButtons>
          <ZoomButton aria-label="Reduzir">
            <svg width="8" height="8" viewBox="0 0 8 8" stroke="#fff" strokeWidth="2">
              <path d="M1 4h5" />
            </svg>
          </ZoomButton>
          <Zoom type="range" min={10} max={190} defaultValue={70} aria-label="Zoom" />
          <ZoomButton aria-label="Ampliar">
            <svg width="8" height="8" viewBox="0 0 8 8" stroke="#fff" strokeWidth="2">
              <path d="M.5 4h7M4 .5v7" />
            </svg>
          </ZoomButton>
          <ZoomValue>70%</ZoomValue>
        </Status>
      </Window>
    </Frame>
  );
}
